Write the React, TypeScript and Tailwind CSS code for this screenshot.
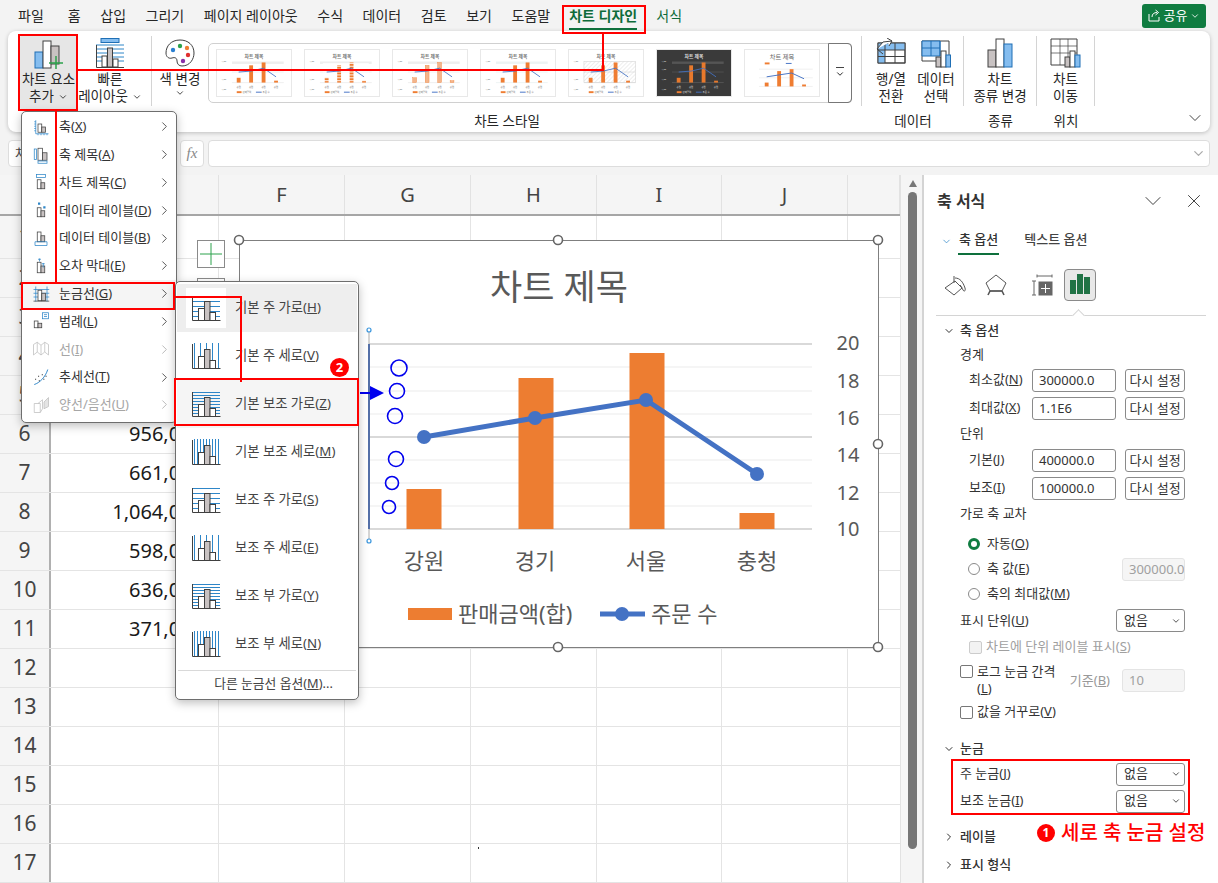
import { ChevronDown, ChevronRight, X } from "lucide-react";
import type { ReactNode } from "react";

const K = ({ t, k }: { t: string; k: string }) => (
  <>
    {t}(<u>{k}</u>)
  </>
);

const tabs = ["홈", "삽입", "그리기", "페이지 레이아웃", "수식", "데이터", "검토", "보기", "도움말"];

function MenuBar() {
  return (
    <div className="h-[31px] flex items-center pl-[18px] pr-[12px] text-[14px] text-[#262626] bg-[#f3f3f3] shrink-0">
      <span className="mr-[24px]">파일</span>
      <div className="flex gap-[19.6px]">
        {tabs.map((t) => (
          <span key={t}>{t}</span>
        ))}
      </div>
      <span className="ml-[19px] relative font-bold text-[#0e6b3a]">
        차트 디자인
        <span className="absolute left-0 right-0 -bottom-[4px] h-[2px] bg-[#0e703c]" />
      </span>
      <span className="ml-[19px] text-[#0e6b3a]">서식</span>
      <div className="ml-auto h-[24px] w-[64px] rounded-[3px] bg-[#107c41] text-white flex items-center justify-center gap-[3px] text-[13px]">
        <svg width="13" height="13" viewBox="0 0 13 13" fill="none" stroke="white" strokeWidth="1">
          <path d="M1 5v7h10V8M4 8c0-3 2-4.5 5-4.5M7.5 1l3 2.5-3 2.5" />
        </svg>
        공유
        <ChevronDown size={10} />
      </div>
    </div>
  );
}

function Sep() {
  return <div className="w-px my-[5px] bg-[#d4d4d4] shrink-0" />;
}

function RibbonButton({ icon, lines, w, chev, active }: { icon: ReactNode; lines: ReactNode[]; w: string; chev?: boolean; active?: boolean }) {
  return (
    <div className={`${w} h-[75px] mt-[4px] flex flex-col items-center rounded-[3px] text-[13.5px] leading-[17px] text-[#262626] ${active ? "bg-[#e6e6e6]" : ""}`}>
      <div className="h-[36px] shrink-0 flex items-center justify-center">{icon}</div>
      {lines.map((l, i) => (
        <div key={i} className="whitespace-nowrap flex items-center gap-[4px]">
          {l}
          {chev && i === lines.length - 1 && <ChevronDown size={10} strokeWidth={2} />}
        </div>
      ))}
    </div>
  );
}

function Group({ label, w, children }: { label?: string; w: string; children: ReactNode }) {
  return (
    <div className={`${w} flex flex-col shrink-0`}>
      <div className="h-[80px] flex">{children}</div>
      <div className="h-[20px] text-center text-[13.5px] leading-[20px] text-[#262626]">{label}</div>
    </div>
  );
}

const thumbs = [
  { bg: "#fff", band: "#eeeeee", stripe: false, soft: false, hatch: false, dark: false },
  { bg: "#fff", band: "#eeeeee", stripe: true, soft: false, hatch: false, dark: false },
  { bg: "#fff", band: "#eeeeee", stripe: false, soft: true, hatch: false, dark: false },
  { bg: "#fff", band: "#edf3f3", stripe: false, soft: false, hatch: false, dark: false },
  { bg: "#fff", band: "#ddd", stripe: false, soft: false, hatch: true, dark: false },
  { bg: "#3a3a3a", band: "#555", stripe: false, soft: false, hatch: false, dark: true },
];

function Thumb({ t }: { t: (typeof thumbs)[number] }) {
  const ink = t.dark ? "#ddd" : "#777";
  const heights = [5, 18, 21, 2];
  return (
    <svg width="76" height="48" viewBox="0 0 76 48" className="shrink-0 border border-[#e8e8e8]" style={{ background: t.bg }}>
      <defs>
        <pattern id="hatchp" width="3" height="3" patternUnits="userSpaceOnUse" patternTransform="rotate(45)">
          <line x1="0" y1="0" x2="0" y2="3" stroke="#ccc" strokeWidth="0.7" />
        </pattern>
      </defs>
      <text x="38" y="8" textAnchor="middle" fontSize="5" fill={ink} fontWeight="700">
        차트 제목
      </text>
      {t.hatch ? <rect x="15" y="12" width="54" height="22" fill="url(#hatchp)" stroke="#ccc" strokeWidth="0.5" /> : <rect x="15" y="12" width="54" height="2.5" fill={t.band} />}
      <line x1="15" y1="23" x2="69" y2="23" stroke={t.band} strokeWidth="0.8" />
      <line x1="15" y1="34" x2="69" y2="34" stroke={t.band} strokeWidth="1" />
      {[0, 1, 2, 3].map((i) => (
        <rect
          key={i}
          x={20 + i * 13}
          y={34 - heights[i]}
          width="4"
          height={heights[i]}
          fill={t.soft ? "#f3b58c" : t.dark ? "#e8792c" : "#ef7d32"}
          stroke={t.soft ? "#ef7d32" : "none"}
          strokeWidth="0.4"
        />
      ))}
      {t.stripe &&
        [14, 17, 20, 23, 26, 29, 32].map((y) => (
          <line key={y} x1="18" y1={y} x2="66" y2={y} stroke={t.bg} strokeWidth="0.9" />
        ))}
      <polyline points="22,23 35,22 48,19 61,28" fill="none" stroke="#4472c4" strokeWidth="0.9" />
      {[3, 12, 22, 33].map((y) => (
        <text key={y} x="4" y={y + 9} fontSize="2.5" fill={ink}>
          1,00
        </text>
      ))}
      {[22, 35, 48, 61].map((x) => (
        <text key={x} x={x} y="40" textAnchor="middle" fontSize="2.5" fill={ink}>
          강원
        </text>
      ))}
      <rect x="20" y="43" width="5" height="2" fill="#ef7d32" />
      <rect x="40" y="43.5" width="6" height="1" fill="#4472c4" />
      <text x="26" y="45" fontSize="2.5" fill={ink}>
        판매금액
      </text>
      <text x="47" y="45" fontSize="2.5" fill={ink}>
        주문 수
      </text>
    </svg>
  );
}

function ThumbBig() {
  return (
    <svg width="76" height="48" viewBox="0 0 76 48" className="shrink-0 border border-[#e8e8e8] bg-white">
      <text x="38" y="9" textAnchor="middle" fontSize="6.5" fill="#666">
        차트 제목
      </text>
      <rect x="20" y="13" width="5" height="2" fill="#ef7d32" />
      <rect x="42" y="13.5" width="6" height="1" fill="#4472c4" />
      {[20, 29, 38].map((y) => (
        <line key={y} x1="14" y1={y} x2="70" y2={y} stroke="#e5e5e5" strokeWidth="0.6" />
      ))}
      {[
        [20, 34, 4],
        [33, 22, 16],
        [46, 20, 18],
        [59, 36, 2],
      ].map(([x, y, h]) => (
        <rect key={x} x={x} y={y} width="4" height={h} fill="#ef7d32" />
      ))}
      <polyline points="22,28 35,26 48,24 61,30" fill="none" stroke="#4472c4" strokeWidth="1" />
    </svg>
  );
}

const C = { dark: "#404040", blue: "#2e86c8", gray: "#c8c2c2", lblue: "#85bdef" };

function Ribbon() {
  return (
    <div className="ml-[8px] mr-[8px] h-[101px] rounded-[8px] bg-white shadow-[0_1px_4px_rgba(0,0,0,0.22)] flex shrink-0">
      <Group w="w-[144px]">
        <div className="flex-1 flex pl-[12px]">
          <RibbonButton
            w="w-[57px]"
            active
            chev
            lines={["차트 요소", "추가"]}
            icon={
              <svg width="32" height="32" viewBox="0 0 32 32">
                <rect x="2" y="15" width="8" height="16" fill={C.lblue} stroke="#1f6fb5" />
                <rect x="10" y="4" width="8" height="27" fill="#fff" stroke={C.dark} />
                <rect x="18" y="9" width="8" height="18" fill={C.gray} stroke={C.dark} />
                <path d="M23 19v14M16 26h14" stroke="#2ca24c" strokeWidth="1.5" />
              </svg>
            }
          />
          <RibbonButton
            w="w-[60px] ml-[3px]"
            chev
            lines={["빠른", "레이아웃"]}
            icon={
              <svg width="30" height="30" viewBox="0 0 30 30" fill="none">
                <rect x="6" y="0.5" width="18" height="4" fill={C.lblue} stroke="#1f6fb5" />
                {[7, 11, 15, 19, 23].map((y) => (
                  <line key={y} x1="1" x2="29" y1={y} y2={y} stroke={C.blue} />
                ))}
                <path d="M1.5 7v22.5H29" stroke={C.dark} />
                <rect x="7" y="18" width="5" height="11" fill="#fff" stroke={C.dark} />
                <rect x="12.5" y="10" width="5" height="19" fill={C.gray} stroke={C.dark} />
                <rect x="18" y="21" width="5" height="8" fill="#fff" stroke={C.dark} />
              </svg>
            }
          />
          <div className="w-[11px]" />
        </div>
        <Sep />
      </Group>
      <Group w="w-[710px]" label="차트 스타일">
        <div className="flex-1 flex">
          <div className="w-[56px] flex justify-center">
            <RibbonButton
              w="w-[52px]"
              lines={["색 변경", <ChevronDown key="c" size={10} strokeWidth={2} />]}
              icon={
                <svg width="32" height="30" viewBox="0 0 32 30">
                  <path d="M16 2C7 2 2 8 2 15c0 4 3 6 6 5 3-1 5 0 5 3 0 3 2 5 5 5 8 0 12-7 12-13C30 7 24 2 16 2z" fill="#fff" stroke={C.dark} />
                  <circle cx="9" cy="12" r="2.2" fill="#2a7fd0" />
                  <circle cx="16" cy="8" r="2.2" fill="#2ca24c" />
                  <circle cx="23" cy="10" r="2.2" fill="#ef7d32" />
                  <circle cx="24" cy="17" r="2.2" fill="#e03030" />
                  <circle cx="19" cy="23" r="2.2" fill="#8a2fa8" />
                </svg>
              }
            />
          </div>
          <div className="mt-[12px] h-[60px] w-[644px] rounded-[5px] border border-[#d0d0d0] flex">
            <div className="flex-1 flex gap-[12px] pl-[7px] pt-[5px]">
              {thumbs.map((t, i) => (
                <Thumb key={i} t={t} />
              ))}
              <ThumbBig />
            </div>
            <div className="w-[24px] border border-[#777] -m-px rounded-r-[4px] flex flex-col items-center justify-center">
              <div className="w-[8px] h-px bg-[#444] mb-[1px]" />
              <ChevronDown size={10} strokeWidth={2} />
            </div>
          </div>
          <div className="flex-1" />
        </div>
        <Sep />
      </Group>
      <Group w="w-[102px]" label="데이터">
        <div className="flex-1 flex pl-[6px]">
          <RibbonButton
            w="w-[46px]"
            lines={["행/열", "전환"]}
            icon={
              <svg width="30" height="30" viewBox="0 0 30 30" fill="none">
                <rect x="2" y="5" width="27" height="20" fill="#fff" stroke={C.dark} />
                <path d="M2 5h27v7H9v13H2z" fill={C.lblue} />
                <path d="M2 12h27M2 18.5h27M9 5v20M19 5v20M2 5h27v20H2z" stroke={C.dark} />
                <path d="M1 11l6-7 9-1M11 0l5 3-3 5M1 11l6 5" stroke={C.dark} fill="#fff" />
              </svg>
            }
          />
          <RibbonButton
            w="w-[44px]"
            lines={["데이터", "선택"]}
            icon={
              <svg width="30" height="30" viewBox="0 0 30 30" fill="none">
                <path d="M1 3h27v20H1z" fill="#fff" stroke={C.dark} />
                <path d="M1 3h18v15H1z" fill={C.lblue} stroke="#1f6fb5" />
                <path d="M10 3v15M1 10h18M19 3v15" stroke="#1f6fb5" />
                <rect x="15" y="19" width="5" height="10" fill={C.gray} stroke={C.dark} />
                <rect x="20" y="13" width="5" height="16" fill="#fff" stroke={C.dark} />
                <rect x="25" y="17" width="4.5" height="12" fill={C.lblue} stroke="#1f6fb5" />
              </svg>
            }
          />
        </div>
        <Sep />
      </Group>
      <Group w="w-[73px]" label="종류">
        <div className="flex-1 flex justify-center">
          <RibbonButton
            w="w-[66px]"
            lines={["차트", "종류 변경"]}
            icon={
              <svg width="26" height="30" viewBox="0 0 26 30">
                <rect x="1" y="12" width="8" height="17" fill={C.gray} stroke={C.dark} />
                <rect x="9" y="1" width="8" height="28" fill="#fff" stroke={C.dark} />
                <rect x="17" y="6" width="8" height="23" fill={C.lblue} stroke="#1f6fb5" />
              </svg>
            }
          />
        </div>
        <Sep />
      </Group>
      <Group w="w-[58px]" label="위치">
        <div className="flex-1 flex justify-center">
          <RibbonButton
            w="w-[40px]"
            lines={["차트", "이동"]}
            icon={
              <svg width="32" height="30" viewBox="0 0 32 30" fill="none">
                <path d="M1 1h26v20l-6 6H1z" fill="#fff" stroke={C.dark} />
                <path d="M1 8h26M1 15h26M10 1v26M18 1v20" stroke={C.dark} strokeWidth="0.7" />
                <rect x="15" y="19" width="5" height="10" fill={C.gray} stroke={C.dark} />
                <rect x="20" y="13" width="5" height="16" fill="#fff" stroke={C.dark} />
                <rect x="25" y="17" width="5" height="12" fill={C.lblue} stroke="#1f6fb5" />
              </svg>
            }
          />
        </div>
        <Sep />
      </Group>
      <div className="flex-1 flex items-end justify-end pr-[5px] pb-[4px]">
        <ChevronDown size={20} strokeWidth={1.1} className="text-[#333]" />
      </div>
    </div>
  );
}

function FormulaBar() {
  return (
    <div className="mt-[8px] h-[27px] flex pl-[8px] pr-[8px] shrink-0 text-[#444]">
      <div className="w-[160px] bg-white border border-[#ddd] rounded-[4px] pl-[6px] text-[13px] leading-[25px]">차트 2</div>
      <div className="ml-[12px] w-[24px] bg-white border border-[#ddd] rounded-[4px] flex items-center justify-center font-['Liberation_Serif',serif] italic text-[15px] text-[#888]">
        fx
      </div>
      <div className="ml-[4px] flex-1 bg-white border border-[#ddd] rounded-[4px] flex items-center justify-end pr-[3px]">
        <ChevronDown size={15} className="text-[#aaa]" />
      </div>
    </div>
  );
}

const cols = [
  { n: "", w: "w-[168px]" },
  { n: "F", w: "w-[126px]" },
  { n: "G", w: "w-[126px]" },
  { n: "H", w: "w-[126px]" },
  { n: "I", w: "w-[125px]" },
  { n: "J", w: "w-[126px]" },
  { n: "", w: "w-[52px]" },
];

const values: Record<number, string> = {
  6: "956,000",
  7: "661,000",
  8: "1,064,000",
  9: "598,000",
  10: "636,000",
  11: "371,000",
};

function Sheet() {
  const rows = Array.from({ length: 17 }, (_, i) => i + 1);
  return (
    <div className="w-[900px] shrink-0 bg-white">
      <div className="h-[41px] flex bg-[#f5f5f5] border-b-2 border-[#a6a6a6]">
        <div className="w-[51px] border-r border-[#e2e2e2]" />
        {cols.map((c, i) => (
          <div key={i} className={`${c.w} border-r border-[#e2e2e2] flex items-center justify-center text-[20px] text-[#444]`}>
            {c.n}
          </div>
        ))}
      </div>
      {rows.map((r) => (
        <div key={r} className={`${r === 1 ? "h-[43px]" : "h-[39px]"} flex border-b border-[#e4e4e4]`}>
          <div className="w-[51px] bg-[#f5f5f5] border-r-2 border-[#b0b0b0] flex items-center justify-center text-[21px] text-[#444]">{r}</div>
          {cols.map((c, i) => (
            <div key={i} className={`${c.w} ${i === cols.length - 1 ? "" : "border-r border-[#e4e4e4]"} flex items-center justify-end pr-[15px] text-[20px] text-[#1a1a1a] whitespace-nowrap`}>
              {i === 0 ? values[r] : ""}
            </div>
          ))}
        </div>
      ))}
    </div>
  );
}

function Scrollbar() {
  return (
    <div className="w-[22px] shrink-0 bg-[#f5f5f5] border-l border-[#e2e2e2] flex flex-col items-center pl-[2px]">
      <div className="mt-[5px] w-0 h-0 border-x-[4.5px] border-x-transparent border-b-[7px] border-b-[#777]" />
      <div className="mt-[5px] w-[9px] h-[657px] rounded-[5px] bg-[#767676]" />
    </div>
  );
}

function Field({ value, w = "w-[84px]", disabled }: { value: string; w?: string; disabled?: boolean }) {
  return (
    <div className={`${w} h-[23px] px-[6px] rounded-[3px] border text-[13px] leading-[21px] overflow-hidden whitespace-nowrap ${disabled ? "border-[#e4e4e4] bg-[#f5f5f5] text-[#a0a0a0]" : "border-[#8a8a8a] text-[#333]"}`}>
      {value}
    </div>
  );
}

function Reset() {
  return <div className="ml-[9px] w-[60px] h-[23px] rounded-[3px] border border-[#8a8a8a] text-center text-[13px] leading-[21px] text-[#333]">다시 설정</div>;
}

function Select({ value }: { value: string }) {
  return (
    <div className="ml-auto w-[69px] h-[23px] pl-[7px] pr-[3px] rounded-[3px] border border-[#8a8a8a] flex items-center justify-between text-[13px] text-[#333]">
      {value}
      <ChevronDown size={10} strokeWidth={2} />
    </div>
  );
}

function ValueRow({ label, value, h }: { label: ReactNode; value: string; h: string }) {
  return (
    <div className={`${h} flex items-center pl-[45px] pr-[33px]`}>
      {label}
      <div className="ml-auto">
        <Field value={value} />
      </div>
      <Reset />
    </div>
  );
}

function Section({ label, open }: { label: string; open?: boolean }) {
  return (
    <div className="h-full flex items-center pl-[19px] pt-[2px] font-medium text-[13px] text-[#333]">
      {open ? <ChevronDown size={12} strokeWidth={2} /> : <ChevronRight size={12} strokeWidth={2} />}
      <span className="ml-[5px]">{label}</span>
    </div>
  );
}

function Radio({ on }: { on?: boolean }) {
  return on ? (
    <div className="w-[12px] h-[12px] rounded-full border-[3.5px] border-[#107c41] bg-white mr-[7px]" />
  ) : (
    <div className="w-[12px] h-[12px] rounded-full border border-[#8a8a8a] bg-white mr-[7px]" />
  );
}

function Check({ disabled }: { disabled?: boolean }) {
  return <div className={`w-[13px] h-[13px] rounded-[2px] border mr-[4px] shrink-0 ${disabled ? "border-[#ccc] bg-[#f2f2f2]" : "border-[#777] bg-white"}`} />;
}

function Panel() {
  return (
    <div className="w-[296px] shrink-0 bg-white border-l-2 border-[#d4d4d4] text-[13px] text-[#333]">
      <div className="h-[52px] flex items-center pl-[13px] pr-[13px]">
        <span className="text-[16px] font-bold text-[#333]">축 서식</span>
        <ChevronDown size={28} strokeWidth={0.8} className="ml-auto mr-[16px] text-[#333]" />
        <X size={22} strokeWidth={1} className="text-[#333]" />
      </div>
      <div className="h-[29px] flex items-start pl-[17px] pt-[2px]">
        <ChevronDown size={11} strokeWidth={1.6} className="mt-[7px] text-[#2e86c8]" />
        <span className="ml-[6px] border-b-2 border-[#0e703c] font-medium leading-[20px] h-[26px] px-px">축 옵션</span>
        <span className="ml-[25px] font-medium leading-[20px] text-[#444]">텍스트 옵션</span>
      </div>
      <div className="h-[60px] mx-[12px] border-b border-[#d4d4d4] pt-[13px] flex relative">
        <div className="w-[32px] h-[32px] ml-[3px] flex items-center justify-center">
          <svg width="26" height="24" viewBox="0 0 24 24" fill="none" stroke="#555" strokeWidth="1">
            <path d="M12 8L2 15l9 7 8-7z" />
            <path d="M11 3v7M12 5c5 0 8 4 10 10 1 3-1 4-2 2-1-2-1-3-3-5" />
          </svg>
        </div>
        <div className="w-[32px] h-[32px] ml-[9px] flex items-center justify-center">
          <svg width="22" height="24" viewBox="0 0 22 24" fill="none" stroke="#555" strokeWidth="1">
            <path d="M11 2L21 10 17 18H5L1 10z" />
            <path d="M5 18l-2 4M17 18l2 4M5 18h12" strokeWidth="1.6" />
          </svg>
        </div>
        <div className="w-[32px] h-[32px] ml-[14px] flex items-center justify-center">
          <svg width="22" height="22" viewBox="0 0 22 22" fill="none" stroke="#666" strokeWidth="1">
            <path d="M6 2h15M6 .5v3M21 .5v3M1 7h4M1 21h4M3 7v14" />
            <rect x="8" y="8" width="13" height="13" fill="#666" />
            <path d="M14.5 10v9M10 14.5h9" stroke="#fff" />
          </svg>
        </div>
        <div className="w-[32px] h-[32px] ml-[6px] rounded-[4px] border border-[#8a8a8a] bg-[#e8e8e8] flex items-end justify-center gap-px pb-[6px]">
          <div className="w-[6px] h-[14px] bg-[#217346]" />
          <div className="w-[6px] h-[20px] bg-[#217346]" />
          <div className="w-[6px] h-[17px] bg-[#217346]" />
        </div>
        <div className="absolute left-[138px] -bottom-[5px] w-[9px] h-[9px] rotate-45 bg-white border-l border-t border-[#d4d4d4]" />
      </div>
      <div className="h-[28px]">
        <Section label="축 옵션" open />
      </div>
      <div className="h-[22px] flex items-center pl-[36px]">경계</div>
      <ValueRow h="h-[28px]" label={<K t="최소값" k="N" />} value="300000.0" />
      <ValueRow h="h-[28px]" label={<K t="최대값" k="X" />} value="1.1E6" />
      <div className="h-[24px] flex items-center pl-[36px]">단위</div>
      <ValueRow h="h-[28px]" label={<K t="기본" k="J" />} value="400000.0" />
      <ValueRow h="h-[28px]" label={<K t="보조" k="I" />} value="100000.0" />
      <div className="h-[24px] flex items-center pl-[36px]">가로 축 교차</div>
      <div className="h-[6px]" />
      <div className="h-[24px] flex items-center pl-[44px]">
        <Radio on />
        <K t="자동" k="O" />
      </div>
      <div className="h-[26px] flex items-center pl-[44px] pr-[33px]">
        <Radio />
        <K t="축 값" k="E" />
        <div className="ml-auto">
          <Field value="300000.0" w="w-[63px]" disabled />
        </div>
      </div>
      <div className="h-[24px] flex items-center pl-[44px]">
        <Radio />
        <K t="축의 최대값" k="M" />
      </div>
      <div className="h-[29px] flex items-center pl-[36px] pr-[33px]">
        <K t="표시 단위" k="U" />
        <Select value="없음" />
      </div>
      <div className="h-[24px] flex items-center pl-[45px] text-[#a0a0a0]">
        <Check disabled />
        <K t="차트에 단위 레이블 표시" k="S" />
      </div>
      <div className="h-[41px] flex items-start pl-[36px] pr-[33px] pt-[4px]">
        <div className="mt-[2px]">
          <Check />
        </div>
        <div className="w-[90px] leading-[17px]">
          로그 눈금 간격
          <br />
          (<u>L</u>)
        </div>
        <span className="ml-auto mt-[9px] text-[#999] leading-[17px]">
          <K t="기준" k="B" />
        </span>
        <div className="ml-[12px] mt-[6px]">
          <Field value="10" w="w-[63px]" disabled />
        </div>
      </div>
      <div className="h-[24px] flex items-center pl-[36px]">
        <Check />
        <K t="값을 거꾸로" k="V" />
      </div>
      <div className="h-[12px]" />
      <div className="h-[24px]">
        <Section label="눈금" open />
      </div>
      <div className="h-[28px] flex items-center pl-[36px] pr-[33px]">
        <K t="주 눈금" k="J" />
        <Select value="없음" />
      </div>
      <div className="h-[26px] flex items-center pl-[36px] pr-[33px]">
        <K t="보조 눈금" k="I" />
        <Select value="없음" />
      </div>
      <div className="h-[8px]" />
      <div className="h-[28px]">
        <Section label="레이블" />
      </div>
      <div className="h-[28px]">
        <Section label="표시 형식" />
      </div>
    </div>
  );
}

function Chart() {
  const minor = [367, 391, 414, 460, 483, 506];
  const major = [344, 437, 529];
  const bars = [
    [424, 489],
    [536, 378],
    [647, 353],
    [757, 513],
  ];
  const pts = [
    [424, 437],
    [535, 418],
    [646, 400],
    [757, 474],
  ];
  const handles = [
    [239, 240],
    [558, 240],
    [878, 240],
    [239, 444],
    [878, 444],
    [239, 647],
    [558, 647],
    [878, 647],
  ];
  const blue = [
    [399, 368, 8],
    [397, 391, 7.5],
    [395, 416, 7.5],
    [396, 459, 7.5],
    [392, 483, 6.5],
    [389, 507, 6.5],
  ];
  return (
    <svg className="absolute left-0 top-0" width="1218" height="883" viewBox="0 0 1218 883">
      <rect x="239.5" y="240.5" width="639" height="407" fill="#fff" stroke="#7f7f7f" strokeWidth="1" />
      {handles.map(([x, y]) => (
        <circle key={`${x}-${y}`} cx={x} cy={y} r="4.5" fill="#fff" stroke="#666" strokeWidth="1.6" />
      ))}
      <text x="559" y="300" textAnchor="middle" fontSize="35" fill="#595959">
        차트 제목
      </text>
      {minor.map((y) => (
        <line key={y} x1="369" x2="812" y1={y} y2={y} stroke="#f2f2f2" strokeWidth="1.5" />
      ))}
      {major.map((y) => (
        <line key={y} x1="369" x2="812" y1={y} y2={y} stroke="#d9d9d9" strokeWidth="2" />
      ))}
      {bars.map(([x, y]) => (
        <rect key={x} x={x - 17.5} y={y} width="35" height={529 - y} fill="#ed7d31" />
      ))}
      <polyline points={pts.map((p) => p.join(",")).join(" ")} fill="none" stroke="#4472c4" strokeWidth="5" />
      {pts.map(([x, y]) => (
        <circle key={x} cx={x} cy={y} r="7" fill="#4472c4" />
      ))}
      <line x1="369" x2="369" y1="330" y2="541" stroke="#aaa" strokeWidth="1" />
      <line x1="369" x2="369" y1="344" y2="529" stroke="#5470a8" strokeWidth="2" />
      {[
        [369, 330],
        [369, 541],
      ].map(([x, y]) => (
        <circle key={y} cx={x} cy={y} r="2" fill="#fff" stroke="#3a96dd" strokeWidth="1.2" />
      ))}
      {[
        [20, 343],
        [18, 381],
        [16, 418],
        [14, 455],
        [12, 493],
        [10, 529],
      ].map(([v, y]) => (
        <text key={v} x="848" y={y + 7} textAnchor="middle" fontSize="20" fill="#595959">
          {v}
        </text>
      ))}
      {["강원", "경기", "서울", "충청"].map((c, i) => (
        <text key={c} x={424 + i * 111} y="569" textAnchor="middle" fontSize="22" fill="#595959">
          {c}
        </text>
      ))}
      <rect x="408" y="608" width="44" height="12" fill="#ed7d31" />
      <text x="458" y="622" fontSize="22" fill="#595959">
        판매금액(합)
      </text>
      <line x1="600" x2="645" y1="614" y2="614" stroke="#4472c4" strokeWidth="5" />
      <circle cx="622" cy="614" r="7" fill="#4472c4" />
      <text x="651" y="622" fontSize="22" fill="#595959">
        주문 수
      </text>
      {blue.map(([x, y, r]) => (
        <circle key={y} cx={x} cy={y} r={r} fill="none" stroke="#0000ee" strokeWidth="1.6" />
      ))}
      <line x1="360" x2="372" y1="393" y2="393" stroke="#0000ee" strokeWidth="2" />
      <path d="M370 386l14 7-14 7z" fill="#0000ee" />
      <rect x="478" y="847" width="1" height="2" fill="#333" />
    </svg>
  );
}

function ItemIcon({ kind, muted }: { kind: string; muted?: boolean }) {
  const d = muted ? "#bdbdbd" : "#404040";
  const b = muted ? "#c8c8c8" : "#2e86c8";
  const g = muted ? "#e4e4e4" : "#c8c2c2";
  const base = (
    <>
      <rect x="8" y="8" width="5" height="11" fill="#fff" stroke={d} />
      <rect x="13" y="12" width="5" height="7" fill={g} stroke={d} />
    </>
  );
  return (
    <div className="w-[24px] h-[24px] shrink-0 flex items-center justify-center">
      <svg width="18" height="18" viewBox="0 0 24 24" fill="none">
        {kind === "axis" && (
          <>
            <path d="M5 3v18M3 5h2M3 8h2M3 11h2M3 14h2M3 17h2M5 21h17M8 21v2M12 21v2M16 21v2M20 21v2" stroke={b} />
            {base}
          </>
        )}
        {kind === "axisTitle" && (
          <>
            <rect x="3" y="4" width="3" height="14" stroke={b} />
            <rect x="8" y="3" width="6" height="16" fill="#fff" stroke={d} />
            <rect x="14" y="9" width="6" height="10" fill={g} stroke={d} />
            <rect x="8" y="20" width="12" height="3" stroke={b} />
          </>
        )}
        {kind === "title" && (
          <>
            <rect x="6" y="2" width="12" height="4" stroke={b} />
            <rect x="7" y="9" width="5" height="12" fill="#fff" stroke={d} />
            <rect x="12" y="13" width="5" height="8" fill={g} stroke={d} />
          </>
        )}
        {kind === "label" && (
          <>
            <rect x="8" y="2" width="3" height="3" fill={b} />
            <rect x="15" y="7" width="3" height="3" fill={b} />
            <rect x="7" y="9" width="5" height="12" fill="#fff" stroke={d} />
            <rect x="12" y="13" width="5" height="8" fill={g} stroke={d} />
          </>
        )}
        {kind === "table" && (
          <>
            <rect x="7" y="4" width="5" height="13" fill="#fff" stroke={d} />
            <rect x="12" y="9" width="5" height="8" fill={g} stroke={d} />
            <path d="M4 17h16v5H4z" stroke={b} />
          </>
        )}
        {kind === "error" && (
          <>
            <path d="M10 2v4M8 3h4" stroke={b} />
            <rect x="7" y="7" width="5" height="14" fill="#fff" stroke={d} />
            <rect x="12" y="12" width="5" height="9" fill={g} stroke={d} />
            <path d="M15 8v6M13 9h4" stroke={b} />
          </>
        )}
        {kind === "grid" && (
          <>
            <path d="M2 6h21M2 11h21M2 16h21M5 2v20M20 2v20" stroke={b} />
            <rect x="8" y="7" width="5" height="14" fill="#fff" stroke={d} />
            <rect x="13" y="11" width="5" height="10" fill={g} stroke={d} />
            <path d="M2 21.5h21" stroke={d} />
          </>
        )}
        {kind === "legend" && (
          <>
            <rect x="14" y="1" width="8" height="8" stroke={b} />
            <path d="M16 3.5h4M16 6h4" stroke={b} />
            <rect x="3" y="12" width="5" height="9" fill="#fff" stroke={d} />
            <rect x="8" y="15" width="5" height="6" fill={g} stroke={d} />
          </>
        )}
        {kind === "line" && <path d="M2 6l5-3 5 4 5-4 5 3v14l-5-4-5 4-5-4-5 4zM7 3v13M12 7v13M17 3v13" stroke={d} />}
        {kind === "trend" && (
          <>
            <path d="M3 22C10 20 18 12 21 2" stroke={b} strokeWidth="1.3" />
            <path d="M4 15h1.5M9 17h1.5M8 11h1.5M13 9h1.5M15 15h1.5M18 11h1.5" stroke={d} strokeWidth="1.5" />
          </>
        )}
        {kind === "updown" && (
          <>
            <path d="M3 10h8v12H3zM8 10l6-5v12l-3 5" stroke={d} />
            <path d="M16 8l6-6v12l-6 3z" stroke={d} fill={g} />
          </>
        )}
      </svg>
    </div>
  );
}

const elementItems = [
  { t: "축", k: "X", icon: "axis" },
  { t: "축 제목", k: "A", icon: "axisTitle" },
  { t: "차트 제목", k: "C", icon: "title" },
  { t: "데이터 레이블", k: "D", icon: "label" },
  { t: "데이터 테이블", k: "B", icon: "table" },
  { t: "오차 막대", k: "E", icon: "error" },
  { t: "눈금선", k: "G", icon: "grid", hover: true },
  { t: "범례", k: "L", icon: "legend" },
  { t: "선", k: "I", icon: "line", muted: true },
  { t: "추세선", k: "T", icon: "trend" },
  { t: "양선/음선", k: "U", icon: "updown", muted: true },
];

function ElementMenu() {
  return (
    <div className="absolute left-[21px] top-[111px] w-[156px] h-[312px] pt-[1px] bg-white border border-[#6e6e6e] rounded-[5px] shadow-[0_3px_10px_rgba(0,0,0,0.25)] text-[13px]">
      {elementItems.map((it) => (
        <div key={it.t} className={`h-[27.8px] flex items-center pl-[7px] pr-[4px] ${it.hover ? "bg-[#f5f5f5]" : ""} ${it.muted ? "text-[#a6a6a6]" : "text-[#333]"}`}>
          <ItemIcon kind={it.icon} muted={it.muted} />
          <span className="ml-[6px] whitespace-nowrap">
            <K t={it.t} k={it.k} />
          </span>
          <ChevronRight size={15} strokeWidth={1.4} className={`ml-auto ${it.muted ? "text-[#b0b0b0]" : "text-[#444]"}`} />
        </div>
      ))}
    </div>
  );
}

function GridIcon({ dir, dense }: { dir: "h" | "v"; dense?: boolean }) {
  const hLines = dense ? [1, 4, 7, 10, 13, 16, 19, 22] : [1, 6, 11, 16, 21];
  const vLines = dense ? [3, 6, 9, 12, 15, 18, 21, 24, 27] : [3, 9, 15, 21, 27];
  return (
    <svg width="30" height="26" viewBox="0 0 30 26" fill="none">
      {dir === "h" && hLines.map((y) => <line key={y} x1="1" x2="29" y1={y + 0.5} y2={y + 0.5} stroke="#2e86c8" />)}
      {dir === "v" && vLines.map((x) => <line key={x} x1={x + 0.5} x2={x + 0.5} y1="0" y2="25" stroke="#2e86c8" />)}
      <path d="M1.5 1v24.5H29.5" stroke="#404040" />
      <rect x="7.5" y="13.5" width="6" height="12" fill="#fff" stroke="#404040" />
      <rect x="13.5" y="6.5" width="5.5" height="19" fill="#c8c2c2" stroke="#404040" />
      <rect x="19" y="17.5" width="5.5" height="8" fill="#fff" stroke="#404040" />
    </svg>
  );
}

const gridItems = [
  { t: "기본 주 가로", k: "H", dir: "h" as const },
  { t: "기본 주 세로", k: "V", dir: "v" as const },
  { t: "기본 보조 가로", k: "Z", dir: "h" as const, dense: true },
  { t: "기본 보조 세로", k: "M", dir: "v" as const, dense: true },
  { t: "보조 주 가로", k: "S", dir: "h" as const },
  { t: "보조 주 세로", k: "E", dir: "v" as const },
  { t: "보조 부 가로", k: "Y", dir: "h" as const, dense: true },
  { t: "보조 부 세로", k: "N", dir: "v" as const, dense: true },
];

function GridMenu() {
  return (
    <div className="absolute left-[175px] top-[281px] w-[184px] h-[419px] pt-[2px] bg-white border border-[#6e6e6e] rounded-[5px] shadow-[0_3px_10px_rgba(0,0,0,0.25)] text-[13.3px] text-[#444]">
      {gridItems.map((it, i) => (
        <div key={it.t} className={`h-[48px] flex items-center mx-px pl-[9px] ${i === 0 ? "bg-[#eeeeee]" : i === 2 ? "bg-[#f5f5f5]" : ""}`}>
          <div className={`w-[40px] h-[40px] flex items-center justify-center ${i === 0 ? "bg-white" : ""}`}>
            <GridIcon dir={it.dir} dense={it.dense} />
          </div>
          <span className="ml-[9px] whitespace-nowrap">
            <K t={it.t} k={it.k} />
          </span>
        </div>
      ))}
      <div className="mt-[2px] mx-[2px] h-px bg-[#d9d9d9]" />
      <div className="h-[26px] flex items-center justify-center pl-[13px] text-[12.8px]">
        <span>
          <K t="다른 눈금선 옵션" k="M" />
          ...
        </span>
      </div>
    </div>
  );
}

function Marks() {
  return (
    <>
      <div className="absolute left-[18px] top-[34px] w-[60px] h-[77px] border-2 border-[#f00]" />
      <div className="absolute left-[562px] top-[5px] w-[84px] h-[29px] border-2 border-[#f00]" />
      <div className="absolute left-[78px] top-[69px] w-[526px] h-[2px] bg-[#f00]" />
      <div className="absolute left-[602px] top-[33px] w-[2px] h-[37px] bg-[#f00]" />
      <div className="absolute left-[55px] top-[111px] w-[2px] h-[171px] bg-[#f00]" />
      <div className="absolute left-[21px] top-[282px] w-[154px] h-[28px] border-2 border-[#f00]" />
      <div className="absolute left-[175px] top-[296px] w-[67px] h-[2px] bg-[#f00]" />
      <div className="absolute left-[240px] top-[296px] w-[2px] h-[86px] bg-[#f00]" />
      <div className="absolute left-[174px] top-[378px] w-[185px] h-[48px] border-2 border-[#f00]" />
      <div className="absolute left-[330px] top-[358px] w-[19px] h-[19px] rounded-full bg-[#f00] text-white text-[13px] leading-[19px] text-center font-bold">2</div>
      <div className="absolute left-[951px] top-[759px] w-[239px] h-[56px] border-2 border-[#f00]" />
      <div className="absolute left-[1037px] top-[823px] flex items-center gap-[6px] text-[20px] font-medium leading-[20px] text-[#f00] whitespace-nowrap">
        <span className="w-[18px] h-[18px] rounded-full bg-[#f00] text-white text-[12px] leading-[18px] text-center font-bold">1</span>
        세로 축 눈금 설정
      </div>
    </>
  );
}

export default function App() {
  return (
    <div className="relative w-[1218px] h-[883px] overflow-hidden flex flex-col bg-[#f3f3f3] font-['Noto_Sans','Noto_Sans_CJK_KR',sans-serif]">
      <MenuBar />
      <Ribbon />
      <FormulaBar />
      <div className="mt-[8px] flex flex-1 min-h-0">
        <Sheet />
        <Scrollbar />
        <Panel />
      </div>
      <Chart />
      <div className="absolute left-[197px] top-[240px] w-[28px] h-[28px] border border-[#8a8a8a] bg-white flex items-center justify-center">
        <svg width="22" height="22" viewBox="0 0 22 22" stroke="#2ca24c" strokeWidth="1">
          <path d="M11 0v22M0 11h22" />
        </svg>
      </div>
      <div className="absolute left-[197px] top-[278px] w-[28px] h-[28px] border border-[#8a8a8a] bg-white" />
      <ElementMenu />
      <GridMenu />
      <Marks />
    </div>
  );
}
